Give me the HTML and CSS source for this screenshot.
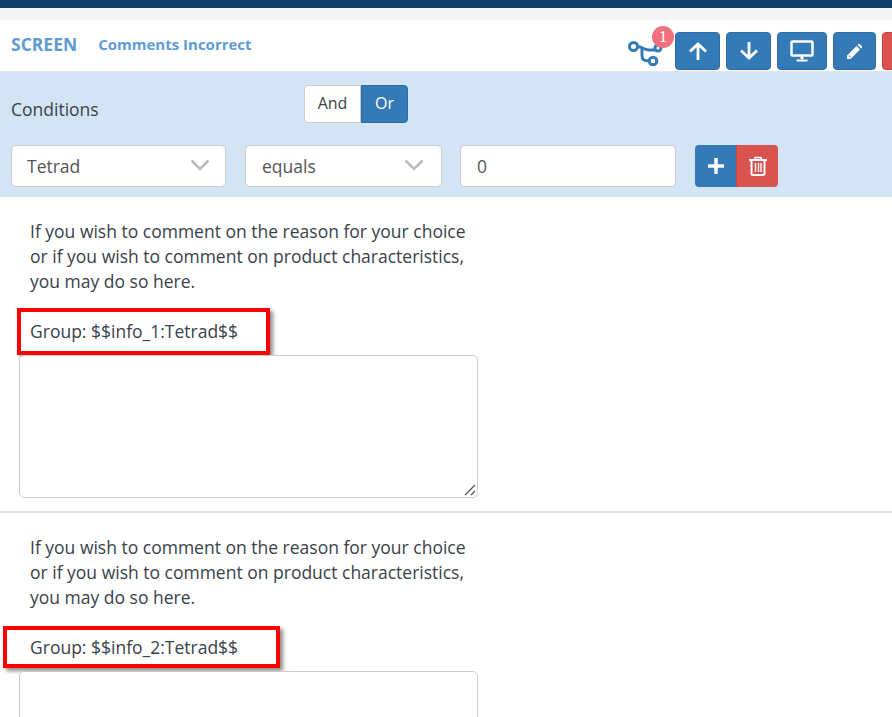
FILE: index.html
```html
<!DOCTYPE html>
<html lang="en">
<head>
<meta charset="utf-8">
<title>Screen</title>
<link rel="stylesheet" href="styles.css">
</head>
<body>
<div class="topbar"></div>
<div class="subbar"></div>
<header class="head">
  <span class="screen">SCREEN</span>
  <span class="name">Comments Incorrect</span>
  <div class="tools">
    <div class="branch">
      <svg width="36" height="30" viewBox="0 0 36 30" fill="none" stroke="#337ab7" stroke-width="3"><circle cx="6.500" cy="9.500" r="4"/><circle cx="26" cy="24" r="3.800"/><path d="M10.500 9.500c5 .5 6 3 11 3.500h7"/><path d="M15 11.500v7c0 4 2 5.500 7 5.500"/><circle cx="31" cy="11" r="3"/></svg>
      <span class="badge">1</span>
    </div>
    <button class="btn w45"><svg width="20" height="20" viewBox="0 0 20 20" fill="none" stroke="#fff" stroke-width="2.800"><path d="M10 19V3M2 10.500L10 3l8 7.500"/></svg></button>
    <button class="btn w45"><svg width="20" height="20" viewBox="0 0 20 20" fill="none" stroke="#fff" stroke-width="2.800"><path d="M10 1v16M2 9.500l8 7.500 8-7.500"/></svg></button>
    <button class="btn w50"><svg width="24" height="22" viewBox="0 0 24 22" fill="none" stroke="#fff"><rect x="1.500" y="1.500" width="21" height="14" rx="1" stroke-width="2.500"/><path d="M12 16v3" stroke-width="3"/><path d="M6.500 20.500h11" stroke-width="2"/></svg></button>
    <button class="btn w43"><svg width="17" height="17" viewBox="0 0 17 17" fill="#fff"><path d="M1 12.500L10.500 3l3.500 3.500L4.500 16H1zM2.500 12.800l1.700 1.700.6-.6-1.700-1.700z" fill-rule="evenodd"/><path d="M11.500 2l1-1h1.200l2.300 2.300v1.200l-1 1z"/></svg></button>
    <button class="btn red w45"></button>
  </div>
</header>
<section class="panel">
  <div class="cond-row">
    <span class="cond-label">Conditions</span>
    <div class="toggle"><span class="opt">And</span><span class="opt on">Or</span></div>
  </div>
  <div class="filter-row">
    <div class="select s1">Tetrad<svg class="chev" width="20" height="12" viewBox="0 0 20 12" fill="none" stroke="#bbb" stroke-width="2.500"><path d="M1.500 1.500L10 10l8.500-8.500"/></svg></div>
    <div class="select s2">equals<svg class="chev" width="20" height="12" viewBox="0 0 20 12" fill="none" stroke="#bbb" stroke-width="2.500"><path d="M1.500 1.500L10 10l8.500-8.500"/></svg></div>
    <div class="select s3">0</div>
    <div class="pair">
      <button class="pbtn add"><svg width="18" height="18" viewBox="0 0 18 18" fill="none" stroke="#fff" stroke-width="3.400"><path d="M9 1v16M1 9h16"/></svg></button>
      <button class="pbtn del"><svg width="18" height="20" viewBox="0 0 18 20" fill="none" stroke="#fff"><path d="M0 4h18" stroke-width="2"/><path d="M6 4V1.500h6V4" stroke-width="1.500"/><path d="M2.500 4v13.500a1.500 1.500 0 0 0 1.500 1.500h10a1.500 1.500 0 0 0 1.500-1.500V4" stroke-width="2"/><path d="M6.500 7v9M9.500 7v9M12 7v9" stroke-width="1.400"/></svg></button>
    </div>
  </div>
</section>
<section class="item first">
  <p class="txt">If you wish to comment on the reason for your choice<br>or if you wish to comment on product characteristics,<br>you may do so here.</p>
  <p class="grp">Group: $$info_1:Tetrad$$<span class="mark m1"></span></p>
  <div class="area"><svg class="grip" width="12" height="12" viewBox="0 0 12 12" stroke="#555" stroke-width="1.300"><path d="M1 11L11 1M7 11l4-4"/></svg></div>
</section>
<section class="item second">
  <p class="txt">If you wish to comment on the reason for your choice<br>or if you wish to comment on product characteristics,<br>you may do so here.</p>
  <p class="grp">Group: $$info_2:Tetrad$$<span class="mark m2"></span></p>
  <div class="area"></div>
</section>
</body>
</html>
```
FILE: styles.css
```css
html, body { margin: 0; padding: 0; height: 717px; overflow: hidden; }
body { width: 892px; background: #fff; font-family: "Open Sans", sans-serif; font-size: 16px; color: #3a4149; }
.topbar { height: 8px; background: #0d3f6a; }
.subbar { height: 12px; background: #f5f5f5; }
.head { height: 51px; display: flex; align-items: flex-start; position: relative; white-space: nowrap; box-sizing: border-box; padding-left: 11px; overflow: hidden; overflow: visible; }
.screen { font-weight: 700; font-size: 17.500px; color: #5e9bd3; line-height: 49px; }
.name { font-weight: 700; font-size: 15px; color: #5e9bd3; margin-left: 21px; line-height: 49px; }
.tools { position: absolute; left: 630px; top: 12px; display: flex; gap: 6px; width: 262px; overflow: visible; clip-path: inset(-10px 0 -10px -10px); }
.branch { width: 39px; height: 38px; position: relative; flex: none; }
.branch svg { position: absolute; left: -3px; top: 5px; }
.badge { position: absolute; left: 22px; top: -6px; width: 22px; height: 22px; border-radius: 50%; background: #f0707c; color: #fff; font-family: "Liberation Serif", serif; font-size: 17px; line-height: 22px; text-align: center; }
.btn { height: 38px; border: 1px solid #2e6da4; border-radius: 4px; background: #337ab7; padding: 0; display: flex; align-items: center; justify-content: center; flex: none; }
.w45 { width: 45px; }
.w50 { width: 50px; }
.w43 { width: 43px; }
.btn.red { background: #d9534f; border-color: #d43f3a; }
.panel { height: 126px; background: #d3e5f5; box-sizing: border-box; padding: 13px 0 0 11px; border-top: 1px solid #dbe6ef; }
.cond-row { display: flex; height: 38px; }
.cond-label { width: 293px; line-height: 48px; font-size: 17.500px; }
.toggle { display: flex; height: 38px; }
.opt { width: 57px; box-sizing: border-box; background: #fff; border: 1px solid #ccc; border-radius: 4px 0 0 4px; text-align: center; line-height: 35px; font-size: 16px; }
.opt.on { width: 47px; background: #337ab7; border-color: #2e6da4; color: #fff; border-radius: 0 4px 4px 0; }
.filter-row { display: flex; margin-top: 22px; align-items: flex-start; }
.select { height: 42px; box-sizing: border-box; background: #fff; border: 1px solid #ccc; border-radius: 5px; display: flex; align-items: center; justify-content: space-between; padding: 2px 15px 0; font-size: 17.500px; color: #555; line-height: 1; }
.s1 { width: 215px; margin-right: 19px; }
.s2 { width: 197px; margin-right: 18px; padding-left: 16px; padding-right: 17px; }
.s3 { width: 216px; margin-right: 19px; padding-left: 16px; }
.chev { margin-top: -5px; }
.pair { display: flex; }
.pbtn { height: 42px; border: none; padding: 0; display: flex; align-items: center; justify-content: center; }
.add { width: 41px; background: #337ab7; border-radius: 4px 0 0 4px; }
.del { width: 42px; background: #d9534f; border-radius: 0 4px 4px 0; border-left: 1px solid #d43f3a; }
.item { padding-left: 19px; box-sizing: border-box; }
.first { height: 316px; padding-top: 22px; border-bottom: 2px solid #e2e2e2; }
.second { height: 204px; overflow: hidden; padding-top: 22px; }
.txt { margin: 0 0 0 11px; font-size: 17.500px; line-height: 25px; }
.grp { margin: 25px 0 0 11px; font-size: 17.500px; line-height: 25px; position: relative; height: 36px; }
.mark { position: absolute; border: 4px solid #f00; box-shadow: 3px 3px 4px rgba(0,0,0,.45); box-sizing: border-box; }
.m1 { left: -13px; top: -11px; width: 253px; height: 47px; }
.m2 { left: -27px; top: -9px; width: 277px; height: 42px; }
.area { width: 459px; height: 143px; box-sizing: border-box; border: 1px solid #ccc; border-radius: 5px; position: relative; background: #fff; }
.grip { position: absolute; right: 1px; bottom: 1px; }
```
